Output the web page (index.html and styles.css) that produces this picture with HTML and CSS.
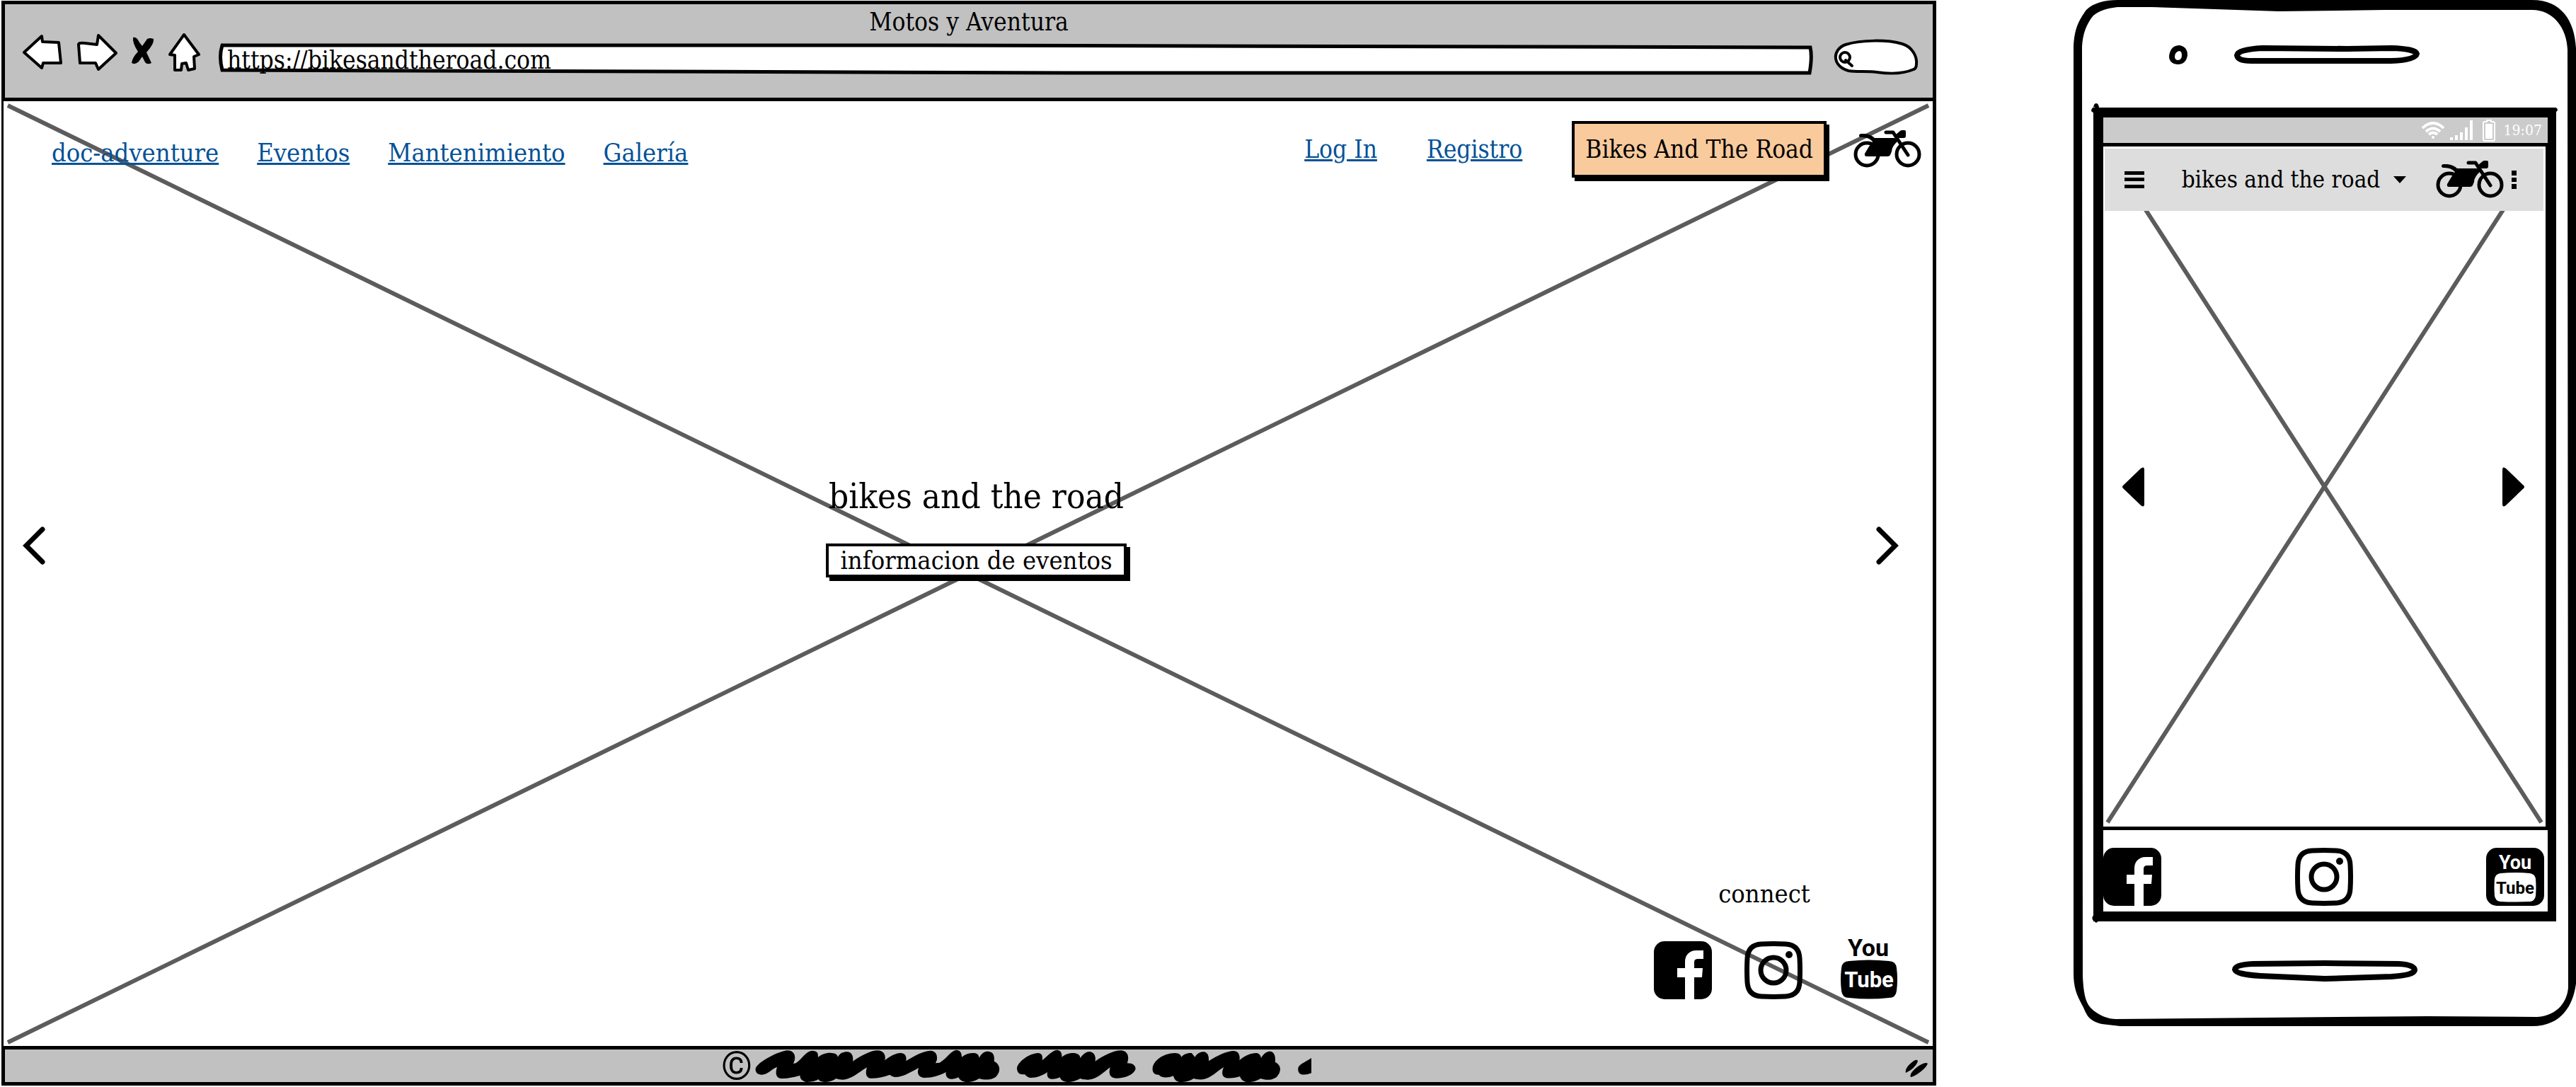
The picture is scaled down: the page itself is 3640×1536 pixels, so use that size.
FILE: index.html
```html
<!DOCTYPE html>
<html lang="es">
<head>
<meta charset="utf-8">
<title>Motos y Aventura</title>
<link rel="stylesheet" href="styles.css">
</head>
<body>
<svg class="defs" aria-hidden="true">
  <symbol id="moto" viewBox="0 0 96 54">
    <g fill="none" stroke="#000" stroke-width="5">
      <circle cx="19" cy="34" r="16"/><circle cx="77" cy="34" r="16"/>
      <path d="M46 3H56L77 35" stroke-width="5" stroke-linecap="round" stroke-linejoin="round"/>
    </g>
    <path d="M8 8Q8 5 11 5H16Q25 6 30 11H58L63 15Q54 23 54 30L52 35Q51 37 48 37H19Q15 37 16 33L22 23L27 16Q22 10 12 10Q8 10 8 8Z"/>
    <path d="M60 6 66 1Q67 0 69 0H72Q74 0 74 2V8Q74 11 71 11H64Z"/>
  </symbol>
  <symbol id="facebook" viewBox="0 0 82 82">
    <rect width="82" height="82" rx="15"/>
    <path fill="#fff" d="M44 82V51H33V38H44V29C44 19 51 13 60 13H70V25H63C59 25 57 26 57 30V38H69L68 51H57V82Z"/>
  </symbol>
  <symbol id="instagram" viewBox="0 0 82 82">
    <g fill="none" stroke="#000" stroke-width="7">
      <path d="M24 4Q41 3 58 4Q77 5 78 24Q79 41 78 58Q77 77 58 78Q41 79 24 78Q5 77 4 58Q3 41 4 24Q5 5 24 4Z"/>
      <circle cx="41" cy="41" r="18"/>
    </g>
    <circle cx="63" cy="19" r="5"/>
  </symbol>
</svg>

<div class="board">
  <section class="browser">
    <header class="chrome">
      <h1 class="chrome-title">Motos y Aventura</h1>
      <div class="toolbar">
        <button class="tool" aria-label="Atrás"><svg width="56" height="52" viewBox="0 0 56 52"><path d="M2 28 27 5 28 13 51 14 54 43 29 43 27 50Z" fill="#fff" stroke="#000" stroke-width="4" stroke-linejoin="round"/></svg></button>
        <button class="tool" aria-label="Adelante"><svg width="58" height="56" viewBox="0 0 58 56"><path d="M3 17Q3 14 12 15L29 17 31 4 56 29 31 52 27 43 5 43Z" fill="#fff" stroke="#000" stroke-width="4" stroke-linejoin="round"/></svg></button>
        <button class="tool" aria-label="Detener"><svg width="32" height="46" viewBox="0 0 32 46"><path d="M2 7Q7 5 11 14L15 19 22 9Q26 7 31 9Q32 16 21 28L28 43Q22 46 19 42L15 34 10 41Q5 46 0 43Q1 35 9 27Q1 15 2 7Z"/></svg></button>
        <button class="tool" aria-label="Inicio"><svg width="45" height="56" viewBox="0 0 45 56"><path d="M22 3 43 31 36 34 37 51 28 53 25 43 19 44 18 53 9 53 9 32 2 31Z" fill="#fff" stroke="#000" stroke-width="4" stroke-linejoin="round"/></svg></button>
        <div class="address">
          <svg class="sketch" viewBox="0 0 2254 46" preserveAspectRatio="none" aria-hidden="true"><path d="M5 4 1000 4 2250 7Q2253 20 2249 43L1200 43 5 39Q0 20 5 4Z" fill="#fff" stroke="#000" stroke-width="5" vector-effect="non-scaling-stroke"/></svg>
          <input class="address-input" type="text" aria-label="Dirección" value="https://bikesandtheroad.com">
        </div>
        <button class="search" aria-label="Buscar"><svg width="121" height="52" viewBox="0 0 121 52"><path d="M22 46C-1 40-2 16 18 9C40 2 78 2 98 8C112 12 119 26 118 36C118 41 117 43 114 44C96 52 76 50 62 48C48 46 34 48 22 46Z" fill="#fff" stroke="#000" stroke-width="4"/><ellipse cx="17" cy="27" rx="7" ry="7" fill="none" stroke="#000" stroke-width="4"/><path d="M18 31 27 39" stroke="#000" stroke-width="4" stroke-linecap="round"/></svg></button>
      </div>
    </header>

    <main class="hero">
      <svg class="cross" viewBox="0 0 2728 1336" preserveAspectRatio="none" aria-hidden="true"><path d="M6 6 2722 1331M2722 6 6 1331"/></svg>
      <nav class="nav">
        <div class="links">
          <a href="#doc">doc-adventure</a>
          <a href="#eventos">Eventos</a>
          <a href="#mantenimiento">Mantenimiento</a>
          <a href="#galeria">Galería</a>
        </div>
        <div class="account">
          <a href="#login">Log In</a>
          <a href="#registro">Registro</a>
          <button class="brand">Bikes And The Road</button>
          <svg class="moto" width="96" height="54" aria-hidden="true"><use href="#moto"/></svg>
        </div>
      </nav>
      <div class="slide">
        <button class="arrow" aria-label="Anterior"><svg width="32" height="54" viewBox="0 0 32 54"><path d="M28 4 5 27 28 50" fill="none" stroke="#000" stroke-width="7" stroke-linecap="round"/></svg></button>
        <div class="caption">
          <h2 class="headline">bikes and the road</h2>
          <button class="cta">informacion de eventos</button>
        </div>
        <button class="arrow" aria-label="Siguiente"><svg width="32" height="54" viewBox="0 0 32 54"><path d="M4 4 27 27 4 50" fill="none" stroke="#000" stroke-width="7" stroke-linecap="round"/></svg></button>
      </div>
      <div class="connect">
        <p class="connect-title">connect</p>
        <div class="connect-icons">
          <a href="#facebook" aria-label="Facebook"><svg width="82" height="82"><use href="#facebook"/></svg></a>
          <a href="#instagram" aria-label="Instagram"><svg width="82" height="82"><use href="#instagram"/></svg></a>
          <a class="tall" href="#youtube" aria-label="YouTube">
            <svg width="80" height="96" viewBox="0 0 80 96">
              <text class="logo-text" x="39" y="35" font-size="34">You</text>
              <path d="M12 42Q40 39 68 42Q78 42 79 52Q81 68 79 84Q78 94 68 94Q40 97 12 94Q2 94 1 84Q-1 68 1 52Q2 42 12 42Z"/>
              <text class="logo-text" x="40" y="79" font-size="31" fill="#fff">Tube</text>
            </svg>
          </a>
        </div>
      </div>
    </main>

    <footer class="status">
      <span class="copy">©</span>
      <svg class="scribble" width="786" height="47" viewBox="148 72 1338 141" preserveAspectRatio="none" aria-hidden="true">
        <path d="M149 158C147 130 205 78 226 76C240 76 246 95 243 117L240 132L246 130C262 110 270 78 286 77C298 78 300 90 299 100L300 104C312 88 325 85 332 87C342 88 346 94 347 104C352 86 362 81 370 82C380 84 385 98 383 122C402 100 425 76 443 76C458 78 463 96 460 118C475 96 490 86 500 87C510 90 513 104 511 121C530 100 552 78 570 77C584 78 587 98 585 118L582 130L592 128C610 108 620 74 633 74C642 76 645 88 645 104C655 90 665 86 675 87C683 88 687 98 687 108C694 84 702 79 711 81C722 84 724 100 723 122C738 135 740 165 727 188C716 202 700 202 687 195C675 208 664 211 655 210C645 208 640 200 637 190C628 198 620 200 613 194C608 188 606 180 607 168C592 182 575 192 555 192C542 190 538 175 540 160L541 150C520 170 505 188 486 189C480 189 476 184 472 179C455 190 440 195 425 194C414 190 413 170 417 148C396 170 380 198 360 200C352 200 348 198 343 195C335 205 325 210 315 210C305 208 302 204 300 198C292 208 280 210 270 210C260 204 256 196 256 182C240 190 225 196 210 195C198 192 196 172 201 146C185 158 178 178 164 179C154 178 150 170 149 158Z"/>
        <path d="M778 155C776 130 806 88 829 87C838 88 840 100 839 118C852 98 864 74 875 74C883 76 886 86 886 104C895 90 906 86 916 87C926 89 930 98 930 109C938 88 946 80 954 81C965 86 968 104 966 122C985 100 1008 76 1029 76C1046 80 1048 105 1043 130C1058 130 1064 142 1063 156C1058 180 1038 194 1016 194C1000 192 998 172 1002 147C985 170 970 198 950 200C940 200 935 198 930 195C920 206 908 211 898 210C888 208 883 200 881 190C872 198 862 200 855 194C850 188 850 178 851 168C840 182 825 192 811 192C802 190 800 182 796 177C784 180 779 170 778 155Z"/>
        <path d="M1104 155C1104 120 1130 88 1158 87C1168 88 1172 94 1173 104C1180 90 1190 86 1198 87L1206 104C1212 86 1220 82 1228 82C1238 86 1240 104 1239 121C1260 98 1282 78 1300 78C1312 80 1315 100 1313 118C1325 98 1342 86 1355 87C1362 90 1364 98 1365 108C1372 86 1380 79 1388 80C1398 84 1400 104 1399 125C1414 138 1415 165 1402 190C1390 204 1375 202 1364 195C1355 206 1342 212 1330 210C1320 206 1317 198 1314 186C1305 192 1290 196 1280 192C1270 186 1270 168 1275 147C1255 170 1245 192 1225 199C1215 200 1208 198 1203 195C1192 208 1178 211 1168 210C1158 205 1156 195 1154 184C1145 190 1138 192 1131 190C1125 188 1122 184 1119 179C1108 180 1104 168 1104 155Z"/>
        <path d="M1454 155C1454 135 1468 130 1486 108V172Q1472 182 1461 177Q1454 172 1454 155Z"/>
      </svg>
      <svg class="grip" width="33" height="26" viewBox="0 0 33 26" aria-hidden="true"><path d="M1 19Q-1 12 11 3Q16-1 18 2Q17 8 8 15ZM8 25Q5 20 18 10Q29 3 32 6Q29 13 17 21Q10 25 8 25Z"/></svg>
    </footer>
  </section>

  <section class="phone">
    <svg class="sketch" viewBox="0 0 710 1450" preserveAspectRatio="none" aria-hidden="true">
      <path fill-rule="evenodd" d="M0 66C1 40 8 28 18 14C28 4 45 0 62 0L648 0C690 0 708 30 710 68L710 1390C706 1420 690 1450 648 1450L66 1450L40 1447C18 1442 18 1430 12 1420C4 1405 0 1395 0 1375ZM12 66L13 1380C14 1400 16 1415 24 1424C36 1436 50 1440 60 1440L270 1438L500 1436L655 1437C685 1435 698 1414 699 1395L698 70C697 40 678 14 648 14L440 14L290 16L110 10L62 10C48 12 38 14 28 22C18 34 13 48 12 66Z"/>
      <path d="M28 154Q28 146 32 146Q36 146 36 154ZM30 151Q25 152 25 157L30 161ZM680 152Q684 152 684 156L680 160ZM30 1292Q24 1296 28 1301L32 1304 36 1301Z"/>
    </svg>
    <div class="bezel-top">
      <svg width="26" height="27" viewBox="0 0 26 27" aria-hidden="true"><path fill-rule="evenodd" d="M0 15Q2 0 15 0Q26 2 26 14Q24 27 12 27Q0 26 0 15ZM8 16Q8 21 13 21Q18 20 18 14Q18 8 14 8Q8 10 8 16Z"/></svg>
      <svg width="262" height="27" viewBox="0 0 262 27" aria-hidden="true"><path fill="none" stroke="#000" stroke-width="8" d="M4 14Q5 6 40 4L160 5 222 4Q256 5 258 12Q256 21 222 22L24 22Q5 22 4 14Z"/></svg>
    </div>
    <div class="screen">
      <div class="statusbar">
        <svg width="32" height="25" viewBox="0 0 32 25" aria-hidden="true"><g fill="none" stroke="#fff" stroke-width="4"><path d="M1 9Q16-5 31 9"/><path d="M6 14Q16 5 26 14"/><path d="M10 18Q16 13 22 18"/></g><circle cx="16" cy="22" r="2" fill="#fff"/></svg>
        <svg width="32" height="28" viewBox="0 0 32 28" aria-hidden="true"><path fill="#fff" d="M0 24H4V28H0ZM7 21H11V28H7ZM14 17H18V28H14ZM21 10H25V28H21ZM28 0H32V28H28Z"/></svg>
        <svg class="battery" width="18" height="31" viewBox="0 0 18 31" aria-hidden="true"><path fill="none" stroke="#fff" stroke-width="2" d="M6 3V1H12V3H15Q17 3 17 5V28Q17 30 15 30H3Q1 30 1 28V5Q1 3 3 3Z"/><path fill="#fff" d="M4 6H14V27H4Z"/></svg>
        <time class="clock">19:07</time>
      </div>
      <div class="pane">
        <svg class="cross" viewBox="0 0 625 962" preserveAspectRatio="none" aria-hidden="true"><path d="M6 6 619 956M619 6 6 956"/></svg>
        <header class="appbar">
          <button class="tool" aria-label="Menú"><svg width="28" height="24" viewBox="0 0 28 24"><path d="M0 0H28V5H0ZM0 9H28V14H0ZM0 19H28V24H0Z"/></svg></button>
          <button class="app-title">bikes and the road <svg width="20" height="10" viewBox="0 0 20 10" aria-hidden="true"><path d="M1 0H19L10 10Z"/></svg></button>
          <svg class="moto" width="96" height="54" aria-hidden="true"><use href="#moto"/></svg>
          <button class="tool" aria-label="Más"><svg width="7" height="26" viewBox="0 0 7 26"><path d="M0 0H7V7H0ZM0 10H7V16H0ZM0 19H7V26H0Z"/></svg></button>
        </header>
        <div class="carousel">
          <button class="tool" aria-label="Anterior"><svg width="32" height="56" viewBox="0 0 32 56"><path d="M1 26 26 2Q31-2 31 4V52Q31 58 26 54L1 30Q-1 28 1 26Z"/></svg></button>
          <button class="tool" aria-label="Siguiente"><svg width="32" height="56" viewBox="0 0 32 56"><path d="M31 26 6 2Q1-2 1 4V52Q1 58 6 54L31 30Q33 28 31 26Z"/></svg></button>
        </div>
      </div>
      <nav class="social">
        <a href="#facebook" aria-label="Facebook"><svg width="82" height="82"><use href="#facebook"/></svg></a>
        <a href="#instagram" aria-label="Instagram"><svg width="82" height="82"><use href="#instagram"/></svg></a>
        <a href="#youtube" aria-label="YouTube">
          <svg width="82" height="82" viewBox="0 0 82 82">
            <rect width="82" height="82" rx="15"/>
            <text class="logo-text" x="41" y="30" font-size="27" fill="#fff">You</text>
            <path fill="#fff" d="M20 36Q41 34 62 36Q69 37 70 44Q71 56 70 68Q69 75 62 76Q41 77 20 76Q13 75 12 68Q11 56 12 44Q13 37 20 36Z"/>
            <text class="logo-text" x="41" y="65" font-size="24">Tube</text>
          </svg>
        </a>
      </nav>
    </div>
    <div class="bezel-bottom">
      <svg width="262" height="30" viewBox="0 0 262 30" aria-hidden="true"><path fill="none" stroke="#000" stroke-width="8" d="M4 13Q4 6 30 5L131 4 235 5Q258 6 258 14Q257 21 225 23L131 26 40 22Q6 20 4 13Z"/></svg>
    </div>
  </section>
</div>
</body>
</html>
```
FILE: styles.css
```css
* { box-sizing: border-box; }

body {
  margin: 0;
  background: #fff;
  color: #000;
  font-family: "Roboto Slab", "DejaVu Serif Condensed", "DejaVu Serif", serif;
  font-size: 36px;
  line-height: 40px;
}

h1, h2, p { margin: 0; font-weight: 400; font-size: inherit; }
svg { display: block; }
a { color: #045297; }
button, input { font: inherit; color: inherit; border: 0; padding: 0; background: none; }
button { cursor: pointer; }

.defs { position: absolute; width: 0; height: 0; }
.logo-text { font-family: Roboto, "Liberation Sans", sans-serif; font-weight: 700; text-anchor: middle; }

.board {
  display: grid;
  grid-template-columns: minmax(0, 2736fr) minmax(0, 710fr);
  column-gap: 194px;
  min-height: 100vh;
}

/* Browser window */
.browser { display: flex; flex-direction: column; padding: 1px 0 2px 2px; }

.chrome {
  height: 142px;
  border: 5px solid #000;
  background: #c1c1c1;
  font-size: 35px;
}
.chrome-title { height: 40px; line-height: 50px; text-align: center; }
.toolbar { display: flex; align-items: flex-start; height: 60px; padding: 0 20px 0 25px; }
.tool { display: block; flex: none; }
.toolbar .tool { margin-right: 20px; }
.address { position: relative; flex: 1; align-self: flex-end; height: 46px; margin: 0 28px 0 6px; }
.sketch { position: absolute; inset: 0; width: 100%; height: 100%; }
.address-input { position: relative; display: block; width: 100%; height: 46px; padding: 4px 12px 0; line-height: 40px; }
.search { align-self: flex-end; }

.hero {
  position: relative;
  display: flex;
  flex-direction: column;
  flex: 1;
  border: 0 solid #000;
  border-width: 0 5px 5px 3px;
}
.cross { position: absolute; inset: 0; width: 100%; height: 100%; fill: none; stroke: #5c5c5c; stroke-width: 6px; }
.cross path { vector-effect: non-scaling-stroke; }

.nav { position: relative; display: flex; align-items: center; justify-content: space-between; padding: 28px 16px 0 68px; }
.links { display: flex; gap: 54px; padding-top: 10px; }
.account { display: flex; align-items: center; gap: 70px; font-size: 35px; }
.brand {
  height: 80px;
  padding: 0 15px;
  border: 4px solid #000;
  background: #f8ca9c;
  box-shadow: 4px 5px 0 #000;
}
.account .moto { margin-left: -32px; }

.slide { position: relative; display: flex; align-items: center; justify-content: space-between; flex: 1; padding: 0 48px 0 27px; }
.arrow { margin-top: 48px; }
.caption { display: flex; flex-direction: column; align-items: center; gap: 36px; padding: 0 0 6px 44px; }
.headline { font-size: 49px; line-height: 60px; }
.cta {
  height: 48px;
  padding: 0 16px;
  border: 4px solid #000;
  background: #fff;
  box-shadow: 5px 5px 0 #000;
}

.connect { position: relative; align-self: flex-end; padding: 0 50px 66px 0; }
.connect-title { margin-bottom: 33px; padding-right: 32px; text-align: center; }
.connect-icons { display: flex; align-items: flex-end; gap: 46px; }
.tall { margin-left: 8px; }

.status {
  position: relative;
  display: flex;
  align-items: center;
  justify-content: center;
  gap: 4px;
  height: 51px;
  padding-left: 134px;
  border: 5px solid #000;
  border-top: 0;
  background: #c1c1c1;
}
.copy { font-family: Roboto, sans-serif; font-size: 56px; }
.grip { position: absolute; right: 6px; bottom: 6px; }

/* Phone */
.phone { position: relative; align-self: start; display: flex; flex-direction: column; min-height: 1450px; padding: 0 28px; }
.bezel-top { display: flex; align-items: center; gap: 66px; height: 152px; padding: 2px 0 0 107px; }
.screen {
  position: relative;
  display: flex;
  flex-direction: column;
  flex: 1;
  border: 14px solid #000;
  border-right-width: 12px;
}
.statusbar { display: flex; align-items: center; justify-content: flex-end; gap: 8px; height: 36px; padding-right: 8px; background: #cbcbcb; color: #fff; }
.battery { margin-left: 6px; }
.clock { margin-left: 4px; font-size: 21px; }
.pane {
  position: relative;
  display: flex;
  flex-direction: column;
  flex: 1;
  border: 0 solid #000;
  border-width: 5px 3px 5px 0;
}
.appbar { position: relative; display: flex; align-items: center; height: 88px; margin: 3px 3px 0 2px; padding: 0 38px 0 28px; background: #ddd; }
.app-title { display: flex; align-items: center; gap: 18px; margin: 0 auto; padding-left: 12px; font-size: 33px; }
.appbar .moto { margin-right: 11px; }
.carousel { position: relative; display: flex; align-items: center; justify-content: space-between; flex: 1; padding: 0 30px 90px 27px; }
.social { display: flex; align-items: center; justify-content: space-between; height: 115px; padding: 16px 5px 0 0; }
.social a, .connect-icons a { display: block; }
.bezel-bottom { display: flex; justify-content: center; align-items: center; height: 148px; padding-bottom: 8px; }
```
